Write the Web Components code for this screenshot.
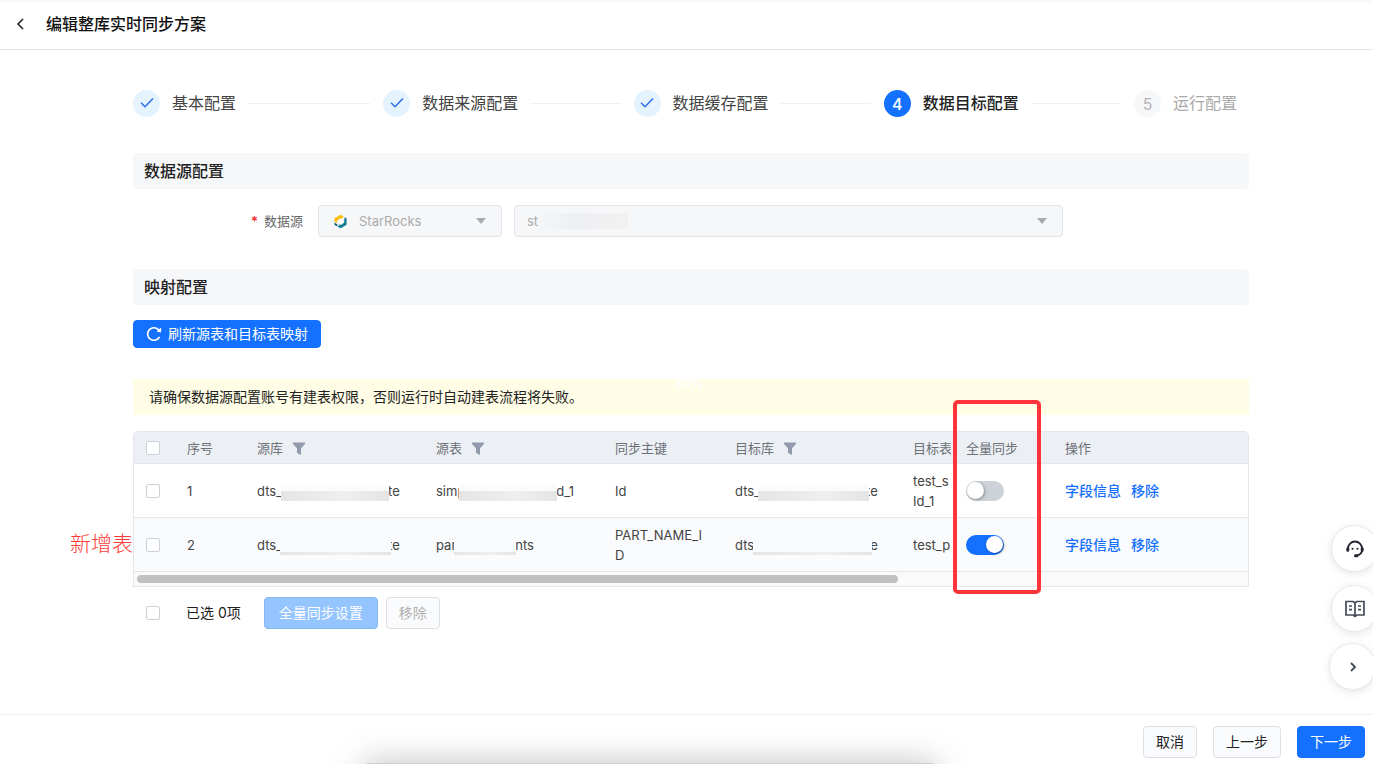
<!DOCTYPE html>
<html lang="zh-CN">
<head>
<meta charset="utf-8">
<meta name="viewport" content="width=device-width, initial-scale=1">
<title>编辑整库实时同步方案</title>
<style>
  html { height: 100%; }
  body {
    margin: 0; min-height: 100%; background: #fff; overflow: hidden auto;
    font: 14px/20px Inter, "Noto Sans CJK SC", sans-serif; color: #333;
    --blue: #1470ff; --line: #e3e6ea; --panel: #f6f7f9;
  }
</style>
</head>
<body>
<sync-app></sync-app>
<script>
const define = (name, html, setup) => {
  const template = document.createElement('template');
  template.innerHTML = html;
  customElements.define(name, class extends HTMLElement {
    constructor() {
      super();
      this.attachShadow({ mode: 'open' }).append(template.content.cloneNode(true));
    }
    connectedCallback() { if (setup) setup(this, this.shadowRoot); }
  });
};

/* Page title bar */
define('page-header', `
<style>
  :host { display: flex; align-items: center; gap: 16px; height: 50px; padding: 0 12px 2px; box-sizing: border-box;
    border-bottom: 1px solid #e5e6e8; background: linear-gradient(#f7f7f7, #fff 4px); }
  a { display: flex; color: #222; }
  h1 { margin: 0; font-size: 16px; line-height: 24px; font-weight: 500; color: #111; }
</style>
<a href="#" aria-label="返回"><svg width="18" height="16" viewBox="0 0 18 16" fill="none" stroke="currentColor" stroke-width="1.6"><path d="M11 3 6 8l5 5"/></svg></a>
<h1><slot></slot></h1>`);

/* One step of the wizard; state is done, active or wait */
define('wizard-step', `
<style>
  :host { display: flex; align-items: center; gap: 12px; font-size: 16px; line-height: 28px; color: #444; white-space: nowrap; }
  .dot { display: grid; place-items: center; width: 27px; height: 27px; border-radius: 50%; background: #e5f3ff; color: #2c6ff0; flex: none; }
  .line { flex: 1; height: 1px; background: #f0f0f0; margin-right: 13px; }
  :host([state=active]) { font-weight: 500; color: #222; }
  :host([state=active]) .dot { background: var(--blue); color: #fff; }
  :host([state=wait]) { color: #aaa; }
  :host([state=wait]) .dot { background: var(--panel); color: #b5b5b5; }
  :host([state=wait]) .line, :host([state=done]) .num, :host(:not([state=done])) svg { display: none; }
</style>
<span class="dot"><svg width="14" height="14" viewBox="0 0 14 14" fill="none" stroke="currentColor" stroke-width="1.5"><path d="m1 6.800 4 4L13 2.500"/></svg><span class="num"></span></span>
<span><slot></slot></span><span class="line"></span>`,
(host, root) => { root.querySelector('.num').textContent = host.getAttribute('num'); });

define('section-title', `
<style>
  :host { display: block; background: var(--panel); border-radius: 4px; padding: 6px 11px; }
  h2 { margin: 0; font-size: 16px; line-height: 24px; font-weight: 500; color: #222; }
</style>
<h2><slot></slot></h2>`);

/* Blurred-out piece of a name */
define('name-mask', `
<style>
  :host { display: inline-block; position: relative; height: 16px; vertical-align: -5px; box-sizing: border-box;
    background: linear-gradient(90deg, #e5e5e5, #ebebeb 35%, #efefef 60%, #e4e4e4); border-top: 6px solid #fafbfd; }
  :host([thin]) { border-top-width: 13px; }
  :host([soft]) { border-top: 0; background: linear-gradient(90deg, #f5f6f8, #eeeff1 40%, #f1f1f2); }
</style>`, host => {
  host.style.width = host.getAttribute('w') + 'px';
  host.style.marginLeft = -(host.getAttribute('l') || 0) + 'px';
  host.style.marginRight = -(host.getAttribute('r') || 0) + 'px';
});

define('ui-button', `
<style>
  :host { display: inline-flex; }
  button { font: inherit; font-size: 14px; line-height: 20px; padding: 5px 12px; border: 1px solid #dcdfe4; border-radius: 4px;
    background: #fafbfc; color: #222; display: flex; align-items: center; gap: 6px; white-space: nowrap; }
  :host([small]) button { padding: 3px 12px; }
  :host([wide]) button { padding: 5px 14px; }
  :host([primary]) button { background: var(--blue); border-color: var(--blue); color: #fff; }
  button:disabled { color: #b2b2b2; }
  :host([primary]) button:disabled { background: #94c5ff; border-color: #88b8f0; color: #fff; }
</style>
<button type="button"><slot name="icon"></slot><slot></slot></button>`,
(host, root) => { root.querySelector('button').disabled = host.hasAttribute('disabled'); });

define('ui-check', `
<style>
  :host { display: block; width: 14px; height: 14px; }
  input { appearance: none; display: block; width: 14px; height: 14px; margin: 0; border: 1px solid #ccd2da; border-radius: 2px; background: #fff; box-sizing: border-box; }
</style>
<input type="checkbox">`,
(host, root) => root.querySelector('input').setAttribute('aria-label', host.getAttribute('label')));

define('ui-switch', `
<style>
  :host { display: block; width: 38px; height: 20px; }
  input { appearance: none; display: flex; align-items: center; width: 38px; height: 20px; margin: 0; padding: 0 1px; border-radius: 10px; background: #cdd2d8; box-sizing: border-box; }
  input::before { content: ""; width: 17px; height: 17px; border-radius: 50%; background: #fff; box-shadow: 1px 1px 3px #0005; }
  input:checked { background: var(--blue); justify-content: flex-end; }
</style>
<input type="checkbox" role="switch" aria-label="全量同步">`,
(host, root) => { root.querySelector('input').checked = host.hasAttribute('on'); });

define('source-form', `
<style>
  :host { display: grid; grid-template-columns: 173px 184px 549px; align-items: center; column-gap: 12px; font-size: 13px; }
  label { justify-self: end; padding-right: 3px; color: #666; }
  .req { color: #f5222d; margin-right: 6px; font-weight: 600; }
  .field { position: relative; }
  select { appearance: none; display: block; width: 100%; height: 32px; box-sizing: border-box; font: inherit; padding: 0 12px; border: 1px solid #e1e4e8;
    border-radius: 4px; background: var(--panel); color: #aaa; opacity: 1; }
  .kind select { padding-left: 40px; }
  .logo { position: absolute; left: 15px; top: 9px; }
  .arrow { position: absolute; right: 16px; top: 13px; }
  .mask { position: absolute; left: 24px; top: 8px; }
</style>
<label for="kind"><span class="req">*</span>数据源</label>
<div class="field kind">
  <select id="kind" disabled><option>StarRocks</option></select>
  <svg class="logo" width="15" height="15" viewBox="0 0 15 15"><path fill="#fbbd0d" d="M1.500 4.200 7.500.8l3.400 1.900-2.600 2-1-.5-3.300 2.500V9L1.500 7.700z"/><path fill="#0f7f91" d="m11.800 3.200 1.800 1v6.600l-6 3.500-3.200-1.800 2.800-2.200 1 .6 3-2.300V6z"/><path fill="#085c76" d="m1.500 8.500 3.200 2.200-1 1.500-2.200-1.400z"/><path fill="#fff" d="m8.800 4.200-3.600 4h2.200l-1 3 3.800-4.400H8z"/></svg>
  <svg class="arrow" width="10" height="6" viewBox="0 0 10 6"><path d="M0 0h10L5 6z" fill="#a9abae"/></svg>
</div>
<div class="field">
  <select aria-label="数据源名称" disabled><option>st</option></select>
  <name-mask class="mask" soft w="90"></name-mask>
  <svg class="arrow" width="10" height="6" viewBox="0 0 10 6"><path d="M0 0h10L5 6z" fill="#a9abae"/></svg>
</div>`);

define('filter-button', `
<style>
  :host { display: inline-block; margin-left: 10px; vertical-align: -2px; }
  button { display: block; border: 0; padding: 0; background: none; }
  svg { display: block; }
</style>
<button type="button" aria-label="筛选"><svg width="12" height="13" viewBox="0 0 12 13"><path fill="#929bad" d="M0 .5h12v1.600L8 6.300V13l-4-2V6.300L0 2.100z"/></svg></button>`);

define('mapping-table', `
<style>
  :host { display: block; position: relative; }
  .frame { border: 1px solid var(--line); border-radius: 5px 5px 0 0; overflow: hidden; }
  table { width: 100%; border-collapse: separate; border-spacing: 0; table-layout: fixed; font-size: 13px; line-height: 20px; color: #444; }
  th, td { box-sizing: border-box; padding: 0 0 0 12px; text-align: left; font-weight: 400; white-space: nowrap; border-bottom: 1px solid var(--line); }
  th { height: 32px; background: #eceff4; color: #6d7178; }
  td { height: 54px; }
  tr.alt td { background: #fafbfd; }
  .clip { overflow: hidden; width: 38px; }
  th:nth-child(8), td:nth-child(8) { padding-left: 15px; }
  a { color: var(--blue); text-decoration: none; font-size: 14px; font-weight: 500; margin-right: 10px; }
  .track { height: 14px; padding: 3px; box-sizing: border-box; background: #fafafa; }
  .thumb { width: 761px; max-width: 100%; height: 8px; border-radius: 4px; background: #c1c1c1; }
  .mark { position: absolute; top: -31px; right: 208px; width: 88px; height: 194px; box-sizing: border-box; border: 4px solid #ff333a; border-radius: 5px; pointer-events: none; }
  .note { position: absolute; right: 100%; top: 98px; font-size: 21px; line-height: 30px; font-weight: 300; color: #ff3b35; white-space: nowrap; }
</style>
<div class="frame">
  <table>
    <colgroup><col style="width:41px"><col style="width:70px"><col style="width:179px"><col style="width:179px"><col style="width:120px"><col style="width:178px"><col style="width:50px"><col style="width:102px"><col></colgroup>
    <thead><tr><th><ui-check label="全选"></ui-check></th><th>序号</th><th>源库<filter-button></filter-button></th><th>源表<filter-button></filter-button></th><th>同步主键</th><th>目标库<filter-button></filter-button></th><th><div class="clip">目标表</div></th><th>全量同步</th><th>操作</th></tr></thead>
    <tbody>
      <tr><td><ui-check label="选择 1"></ui-check></td><td>1</td>
        <td>dts_<name-mask w="108" l="1" r="1"></name-mask>te</td>
        <td>simp<name-mask w="98" l="6" r="1"></name-mask>d_1</td>
        <td>Id</td>
        <td>dts_<name-mask w="111" l="2" r="3"></name-mask>te</td>
        <td><div class="clip">test_s<br>Id_1</div></td>
        <td><ui-switch></ui-switch></td><td><a href="#">字段信息</a><a href="#">移除</a></td></tr>
      <tr class="alt"><td><ui-check label="选择 2"></ui-check></td><td>2</td>
        <td>dts_<name-mask thin w="111" l="2" r="3"></name-mask>te</td>
        <td>par<name-mask thin w="62" l="2" r="1"></name-mask>nts</td>
        <td>PART_NAME_I<br>D</td>
        <td>dts_<name-mask thin w="119" l="7" r="6"></name-mask>te</td>
        <td><div class="clip">test_p</div></td>
        <td><ui-switch on></ui-switch></td><td><a href="#">字段信息</a><a href="#">移除</a></td></tr>
    </tbody>
  </table>
  <div class="track"><div class="thumb"></div></div>
</div>
<div class="mark"></div>
<div class="note">新增表</div>`);

/* Floating help buttons along the right edge */
define('float-tools', `
<style>
  :host { position: fixed; right: 0; top: 515px; width: 61px; height: 190px; overflow: hidden; display: flex; flex-direction: column; align-items: flex-start; padding: 10px 0 0 19px; box-sizing: border-box; }
  button { flex: none; width: 47px; height: 47px; padding: 0; border: 1px solid #e6e8f0; border-radius: 50%; background: #fff; box-shadow: 0 2px 8px #0000001a; display: grid; place-items: center; color: #444b59; }
  button + button { margin-top: 13px; }
  button:last-child { margin: 11px 0 0 -2px; }
</style>
<button type="button" aria-label="客服"><svg width="20" height="20" viewBox="0 0 20 20" fill="none" stroke="#20242c" stroke-width="1.800" stroke-linecap="round"><path d="M3 11V9.500a7 7 0 0 1 14 0V11c0 3-2.500 5-5.500 5.500"/><path stroke-width="3" d="M2.800 9.800v1.400M17.200 9.800v1.400M10.500 16.700h1.400"/><path stroke-width="2" d="M7.500 9.700h.1M12.400 9.700h.1"/></svg></button>
<button type="button" aria-label="文档"><svg width="20" height="18" viewBox="0 0 20 18" fill="none" stroke="currentColor" stroke-width="1.700"><path d="M1 1.500h7.200L10 3l1.800-1.500H19v13.500h-7.200L10 16.500 8.200 15H1zM10 3v13M4 6h3M4 9.700h3M13 6h3M13 9.700h3"/></svg></button>
<button type="button" aria-label="展开"><svg width="10" height="12" viewBox="0 0 10 12" fill="none" stroke="currentColor" stroke-width="1.800"><path d="m3 2 4 4-4 4"/></svg></button>`);

define('sync-app', `
<style>
  :host { display: flex; flex-direction: column; min-height: 100vh; position: relative; }
  main { flex: 1; padding: 39px 124px 0 133px; }
  .steps { display: grid; grid-template-columns: repeat(4, 1fr) 115px; }
  section-title { margin-top: 36px; }
  source-form { margin: 16px 0 32px; }
  source-form + section-title { margin-top: 0; }
  .refresh { display: flex; margin-top: 15px; }
  .alert { position: relative; margin: 31px 0 16px; padding: 8px 16px; background: #fffde6; color: #222; }
  .zoom { position: absolute; left: 542px; top: -5px; font-size: 12px; font-weight: 600; color: #fff; }
  .batch { display: flex; align-items: center; margin-top: 10px; padding-left: 13px; color: #222; }
  .batch span { margin: 0 23px 0 26px; }
  .batch ui-button + ui-button { margin-left: 8px; }
  footer { display: flex; justify-content: flex-end; gap: 16px; padding: 11px 8px 6px; border-top: 1px solid #f0f0f0; }
  .shade { position: fixed; left: 363px; right: 436px; bottom: -39px; height: 40px; border-radius: 6px; background: #ccc; box-shadow: 0 0 34px #00000040; pointer-events: none; }
</style>
<page-header>编辑整库实时同步方案</page-header>
<main>
  <div class="steps">
    <wizard-step state="done" num="1">基本配置</wizard-step>
    <wizard-step state="done" num="2">数据来源配置</wizard-step>
    <wizard-step state="done" num="3">数据缓存配置</wizard-step>
    <wizard-step state="active" num="4">数据目标配置</wizard-step>
    <wizard-step state="wait" num="5">运行配置</wizard-step>
  </div>
  <section-title>数据源配置</section-title>
  <source-form></source-form>
  <section-title>映射配置</section-title>
  <ui-button class="refresh" primary small><svg slot="icon" width="16" height="16" viewBox="0 0 16 16" fill="none" stroke="#fff" stroke-width="1.600"><path d="M13.600 10.800A6.300 6.300 0 1 1 13 4.200"/><path d="m15.200 1.500-.2 5-4.600-.9z" fill="#fff" stroke="none"/></svg>刷新源表和目标表映射</ui-button>
  <div class="alert">请确保数据源配置账号有建表权限，否则运行时自动建表流程将失败。<span class="zoom">80%</span></div>
  <mapping-table></mapping-table>
  <div class="batch">
    <ui-check label="全选"></ui-check><span>已选 0项</span>
    <ui-button primary wide disabled>全量同步设置</ui-button><ui-button disabled>移除</ui-button>
  </div>
</main>
<footer><ui-button>取消</ui-button><ui-button>上一步</ui-button><ui-button primary>下一步</ui-button></footer>
<div class="shade"></div>
<float-tools></float-tools>`);
</script>
</body>
</html>
